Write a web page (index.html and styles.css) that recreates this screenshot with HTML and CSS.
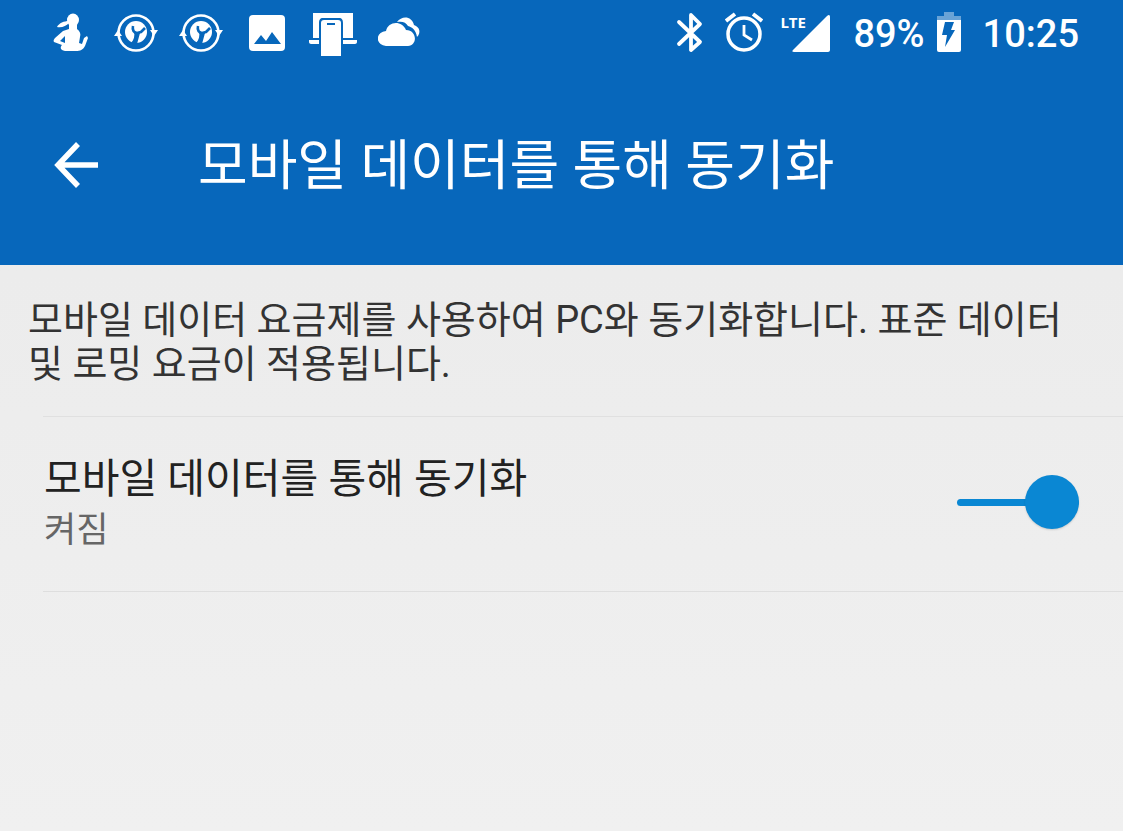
FILE: index.html
```html
<!DOCTYPE html>
<html lang="ko">
  <head>
    <meta charset="UTF-8" />
    <meta name="viewport" content="width=device-width, initial-scale=1.0" />
    <title>모바일 데이터를 통해 동기화</title>
    <link rel="stylesheet" href="styles.css">
  </head>
  <body>
    <header class="app-header">
      <div class="status-bar">
        <div class="status-left">
          <!-- Fitness -->
          <svg width="44" height="48" viewBox="0 0 44 48">
            <ellipse cx="24" cy="10" rx="6" ry="6.5" fill="#fff"/>
            <path fill="#fff" d="M20 11C15 11 10 13 8 17C13 18 17 16 20 13Z"/>
            <path fill="#fff" fill-rule="evenodd" d="M20 14H28V19C31 21 32 24 31 27L30 33L33 34L35 28L38 26L39 28L36 36C34 40 31 41 27 41H16C11 40 11 37 13 35L5 32C4 31 5 29 6 28L14 21L20 19ZM16 26L11 31L16 33Z"/>
          </svg>
          <!-- Repair sync -->
          <svg width="44" height="48" viewBox="0 0 44 48">
            <circle cx="22" cy="23" r="17.5" fill="none" stroke="#fff" stroke-width="2.6"/>
            <circle cx="22" cy="22" r="11" fill="#fff"/>
            <path fill="#fff" d="M0 26L4 20L8 26ZM36 20H44L40 26Z"/>
            <path fill="none" stroke="#0767bb" stroke-width="2.6" stroke-linejoin="round" d="M19 16C18 20 20 23 23 23L27 22L31 18"/>
            <path fill="#0767bb" d="M20 21L26 23L23 34L17 33C20 30 21 26 20 21Z"/>
          </svg>
          <svg width="44" height="48" viewBox="0 0 44 48">
            <circle cx="22" cy="23" r="17.5" fill="none" stroke="#fff" stroke-width="2.6"/>
            <circle cx="22" cy="22" r="11" fill="#fff"/>
            <path fill="#fff" d="M0 26L4 20L8 26ZM36 20H44L40 26Z"/>
            <path fill="none" stroke="#0767bb" stroke-width="2.6" stroke-linejoin="round" d="M19 16C18 20 20 23 23 23L27 22L31 18"/>
            <path fill="#0767bb" d="M20 21L26 23L23 34L17 33C20 30 21 26 20 21Z"/>
          </svg>
          <!-- Picture -->
          <svg width="44" height="48" viewBox="0 0 44 48">
            <rect x="5" y="5" width="36" height="36" rx="4" fill="#fff"/>
            <path fill="#0767bb" d="M10 34L17 25L22 31L28 22L37 34Z"/>
          </svg>
          <!-- Phone and laptop -->
          <svg width="48" height="48" viewBox="0 0 48 48">
            <path fill="#fff" d="M4 3H44V28H34V13C34 10 33 8 30 8H14C11 8 10 10 10 13V28H4Z"/>
            <path fill="#fff" d="M0 30H10V34H2C1 34 0 33 0 32ZM34 30H48V32C48 33 47 34 46 34H34Z"/>
            <path fill="#fff" d="M15 10H29C31 10 32 11 32 13V46H12V13C12 11 13 10 15 10Z"/>
            <path stroke="#0767bb" stroke-width="2" d="M18 14H26"/>
          </svg>
          <!-- Cloud -->
          <svg width="44" height="48" viewBox="0 0 44 48">
            <path fill="#fff" d="M19 12C24 5 34 6 36 15C42 17 43 23 39 27C38 20 34 17 30 16C28 12 24 11 19 12Z"/>
            <path fill="#fff" d="M8 36C-3 35-3 22 8 21C10 11 24 10 28 20C39 20 40 35 30 36Z"/>
          </svg>
        </div>
        <div class="status-right">
          <!-- Bluetooth -->
          <svg width="28" height="48" viewBox="0 0 28 48">
            <path fill="none" stroke="#fff" stroke-width="3.8" stroke-linejoin="round" stroke-linecap="round" d="M3 12L24 32L15 40V5L24 14L3 34"/>
          </svg>
          <!-- Alarm -->
          <svg class="alarm" width="38" height="48" viewBox="0 0 38 48">
            <circle cx="19" cy="24" r="16" fill="none" stroke="#fff" stroke-width="3.5"/>
            <path fill="none" stroke="#fff" stroke-width="3.8" d="M1 11L10 4M28 4L37 11"/>
            <path fill="none" stroke="#fff" stroke-width="2.8" d="M19 15V25L27 30"/>
          </svg>
          <!-- Signal -->
          <span class="signal">
            <span class="signal-label">LTE</span>
            <svg width="38" height="48" viewBox="0 0 38 48">
              <path fill="#fff" d="M2 42C0 42 0 41 1 40L35 6C37 4 38 5 38 7V40C38 41 37 42 36 42Z"/>
            </svg>
          </span>
          <span class="status-text">89%</span>
          <!-- Battery -->
          <svg class="battery" width="24" height="48" viewBox="0 0 24 48">
            <path fill="#69a3d6" d="M7 2H17V6H24V10H0V6H7Z"/>
            <path fill="#fff" d="M0 10H24V40Q24 42 22 42H2Q0 42 0 40Z"/>
            <path fill="#0767bb" d="M8 12H17L14 20H18L8 37L10 25H5Z"/>
          </svg>
          <span class="status-text">10:25</span>
        </div>
      </div>
      <div class="toolbar">
        <button type="button" class="back-btn" aria-label="뒤로">
          <svg width="46" height="46" viewBox="0 0 46 46">
            <path fill="none" stroke="#fff" stroke-width="5.5" d="M24 2L4 23L24 44M4 23H44"/>
          </svg>
        </button>
        <h1>모바일 데이터를 통해 동기화</h1>
      </div>
    </header>

    <main>
      <p class="description">
        모바일 데이터 요금제를 사용하여 PC와 동기화합니다. 표준 데이터 및 로밍 요금이 적용됩니다.
      </p>
      <div class="setting">
        <label class="setting-text" for="sync-toggle">
          <span class="setting-title">모바일 데이터를 통해 동기화</span>
          <span class="setting-state">켜짐</span>
        </label>
        <input type="checkbox" role="switch" id="sync-toggle" class="toggle" checked />
      </div>
    </main>
  </body>
</html>
```
FILE: styles.css
```css
/* General Styles */
* {
  box-sizing: border-box;
}

body {
  font-family: Roboto, "Noto Sans CJK KR", sans-serif;
  margin: 0;
  min-height: 100vh;
  background: linear-gradient(#eaeaea, #f0f0f0);
  color: #333;
}

svg {
  display: block;
  flex: none;
}

/* Header */
.app-header {
  background: #0767bb;
  color: #fff;
}

.status-bar {
  display: flex;
  justify-content: space-between;
  height: 68px;
  padding: 10px 44px 10px 49px;
}

.status-left {
  display: flex;
  gap: 21px;
}

.status-right {
  display: flex;
  align-items: center;
}

.alarm {
  margin-left: 21px;
}

.signal {
  display: flex;
  position: relative;
  margin: 0 23px 0 29px;
}

.signal-label {
  position: absolute;
  top: 0;
  left: -12px;
  font-family: "Open Sans", sans-serif;
  font-size: 15px;
  font-weight: 700;
  line-height: 24px;
}

.status-text {
  font-size: 38px;
  font-weight: 500;
  line-height: 48px;
}

.battery {
  margin: 0 22px 0 12px;
}

.toolbar {
  display: flex;
  align-items: center;
  gap: 98px;
  padding: 64px 54px 68px;
}

.back-btn {
  padding: 0;
  border: none;
  background: none;
  cursor: pointer;
}

h1 {
  margin: 0;
  padding-top: 5px;
  font-size: 54px;
  font-weight: 400;
  line-height: 60px;
}

/* Settings */
.description {
  margin: 0;
  padding: 33px 28px 30px;
  font-size: 38px;
  line-height: 44px;
}

.setting {
  display: flex;
  align-items: center;
  justify-content: space-between;
  margin-left: 43px;
  padding: 36px 44px 34px 1px;
  border-top: 1px solid #e0e0e0;
  border-bottom: 1px solid #dedede;
}

.setting-text {
  display: flex;
  flex-direction: column;
  line-height: 52px;
}

.setting-title {
  font-size: 41px;
  color: #222;
}

.setting-state {
  font-size: 35px;
  color: #666;
}

.toggle {
  appearance: none;
  display: flex;
  align-items: center;
  position: relative;
  width: 122px;
  height: 54px;
  margin: 0 0 6px;
  cursor: pointer;
}

.toggle::before {
  content: "";
  width: 100%;
  height: 7px;
  border-radius: 4px;
  background: #0a87d3;
}

.toggle::after {
  content: "";
  position: absolute;
  top: 0;
  left: 0;
  width: 54px;
  height: 54px;
  border-radius: 50%;
  background: #0a87d3;
  box-shadow: 0 1px 2px rgba(0, 0, 0, 0.15);
}

.toggle:checked::after {
  left: auto;
  right: 0;
}
```
